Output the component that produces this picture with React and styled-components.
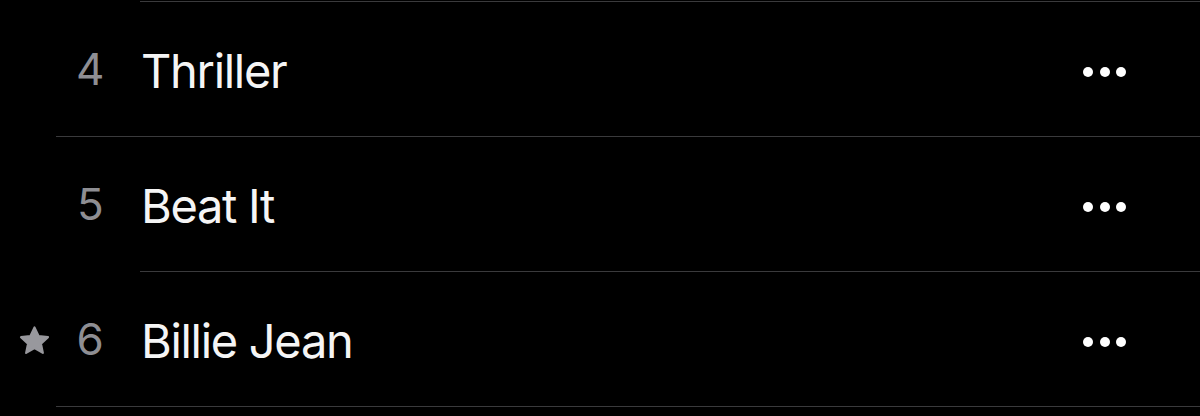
import React from "react";
import styled, { createGlobalStyle } from "styled-components";

const Global = createGlobalStyle`
  html, body {
    margin: 0;
    padding: 0;
    background: #000;
  }
  body {
    font-family: Inter, "Liberation Sans", sans-serif;
    -webkit-font-smoothing: antialiased;
  }
`;

const List = styled.div`
  display: flex;
  flex-direction: column;
  width: 1200px;
  padding-top: 1px;
  background: #000;
`;

const Divider = styled.div`
  height: 1px;
  margin-left: ${(p) => p.$inset}px;
  background: #3a3a3c;
`;

const Row = styled.div`
  display: flex;
  align-items: center;
  height: 134px;
  padding-right: 74px;
`;

const StarSlot = styled.div`
  width: 68px;
  display: flex;
  justify-content: center;
  align-items: center;
  padding-top: 2px;
  color: #98989d;
`;

const TrackNumber = styled.div`
  width: 44px;
  text-align: center;
  font-size: 44px;
  font-weight: 400;
  color: #8e8e93;
  letter-spacing: -0.5px;
`;

const Title = styled.div`
  flex: 1;
  margin-left: 29px;
  padding-top: 2px;
  font-size: 47px;
  font-weight: 400;
  color: #f5f5f5;
  letter-spacing: -1.3px;
  white-space: nowrap;
`;

const More = styled.div`
  display: flex;
  gap: 6.5px;
  margin-top: 5px;
`;

const Dot = styled.span`
  width: 10px;
  height: 10px;
  border-radius: 50%;
  background: #fff;
`;

const Star = () => (
  <svg width="33" height="31" viewBox="0 0 24 23" fill="currentColor" stroke="currentColor" strokeWidth="1.6" strokeLinejoin="round">
    <path d="M12 1.8l3 6.4 7 .8-5.2 4.8 1.4 6.9L12 17.2l-6.2 3.5 1.4-6.9L2 9l7-.8z" />
  </svg>
);

const tracks = [
  { n: 4, title: "Thriller", inset: 56 },
  { n: 5, title: "Beat It", inset: 140 },
  { n: 6, title: "Billie Jean", inset: 56, star: true },
];

export default function App() {
  return (
    <>
      <Global />
      <List>
        <Divider $inset={140} />
        {tracks.map((t) => (
          <React.Fragment key={t.n}>
            <Row>
              <StarSlot>{t.star && <Star />}</StarSlot>
              <TrackNumber>{t.n}</TrackNumber>
              <Title>{t.title}</Title>
              <More>
                <Dot />
                <Dot />
                <Dot />
              </More>
            </Row>
            <Divider $inset={t.inset} />
          </React.Fragment>
        ))}
      </List>
    </>
  );
}
